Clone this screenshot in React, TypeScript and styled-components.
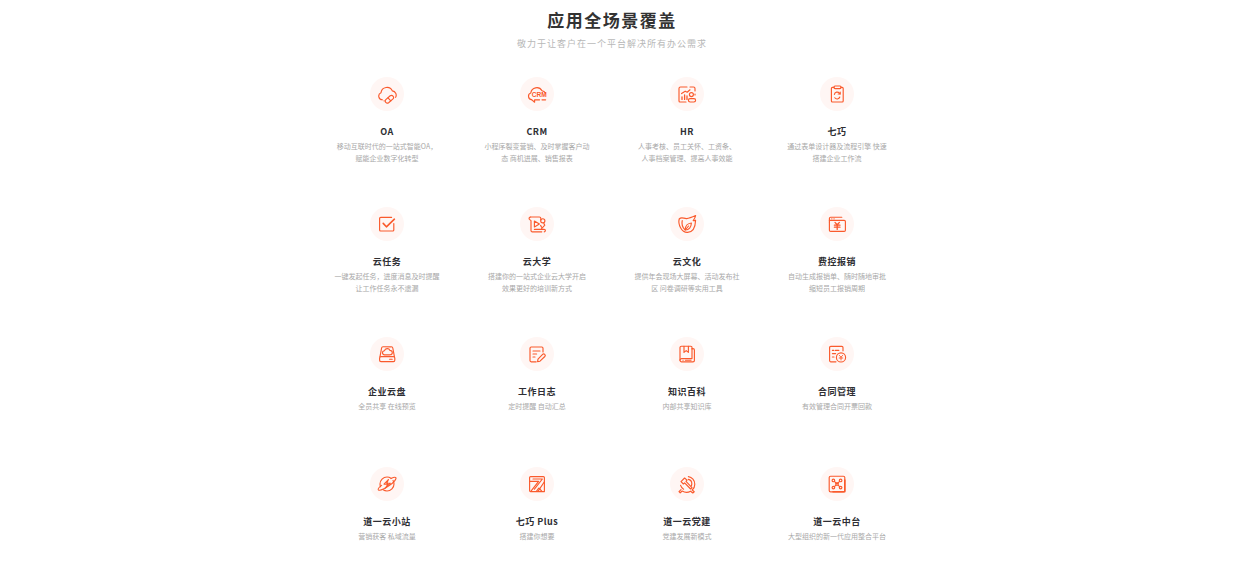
import React from 'react'
import styled, { createGlobalStyle } from 'styled-components'

const GlobalStyle = createGlobalStyle`
  html, body {
    margin: 0;
    padding: 0;
    background: #fff;
  }
  body {
    font-family: "Noto Sans CJK SC", "Noto Sans", sans-serif;
  }
`

const Page = styled.div`
  width: 1224px;
  height: 568px;
  overflow: hidden;
  display: flex;
  flex-direction: column;
  align-items: center;
`
const Heading = styled.h2`
  margin: 7px 0 0;
  font-size: 17px;
  line-height: 25px;
  font-weight: 700;
  letter-spacing: 1.5px;
  color: #333;
`
const SubHeading = styled.p`
  margin: 5px 0 0;
  font-size: 9px;
  line-height: 14px;
  letter-spacing: 1px;
  color: #b8b8b8;
`
const Grid = styled.div`
  margin-top: 26px;
  display: grid;
  grid-template-columns: repeat(4, 150px);
  grid-auto-rows: 130px;
`
const Cell = styled.div`
  display: flex;
  flex-direction: column;
  align-items: center;
  text-align: center;
`
const IconCircle = styled.div`
  width: 34px;
  height: 34px;
  border-radius: 50%;
  background: #fff6f4;
  display: flex;
  align-items: center;
  justify-content: center;
`
const Title = styled.h4`
  margin: 14px 0 0;
  font-size: 9px;
  line-height: 13px;
  font-weight: 700;
  letter-spacing: 0.5px;
  color: #2e2e33;
`
const Desc = styled.p`
  margin: 2px 0 0;
  width: 130px;
  font-size: 7px;
  line-height: 12px;
  color: #a8a8a8;
  white-space: pre-line;
`
const Svg = styled.svg`
  width: 20px;
  height: 20px;
  fill: none;
  stroke: #fa5a2c;
  stroke-width: 1.15;
  stroke-linecap: round;
  stroke-linejoin: round;
`
const IconLabel = styled.text`
  fill: #fa5a2c;
  stroke: none;
  font-family: "Liberation Sans", sans-serif;
  font-weight: 700;
  text-anchor: middle;
`

const icons: Record<string, React.ReactNode> = {
  oa: (
    <>
      <path d="M5.4 15.8a3.7 3.7 0 0 1-1.4-7.1 6 6 0 0 1 11.4-1.8 4.3 4.3 0 0 1 3.2 6.4" />
      <path d="M8.8 15.6l4.4-3.8a2.1 2.1 0 0 1 2.8 3.1l-4.4 3.8a2.1 2.1 0 0 1-2.8-3.1z" />
      <path d="M11 13.8l2.8 3" />
      <path d="M7 16.8h.1" />
    </>
  ),
  crm: (
    <>
      <path d="M4.6 15.6a3.4 3.4 0 0 1-.8-6.6 6 6 0 0 1 11.2-2.2 4.3 4.3 0 0 1 3.4 2.4" />
      <path d="M4.6 15.6l3 2.6v-2.4h5" />
      <path d="M15 15.8h3.6" />
      <IconLabel x="12.2" y="13.4" fontSize="6.6">CRM</IconLabel>
    </>
  ),
  hr: (
    <>
      <path d="M10 3H3.5A1.5 1.5 0 0 0 2 4.5V17a1 1 0 0 0 1 1h6" />
      <path d="M13 3h3.5A1.5 1.5 0 0 1 18 4.5V7" />
      <path d="M18 10v1" />
      <path d="M4.6 9.6l3.6-2.4 2 1L13 5.8" />
      <path d="M5 15.4v-2.6M7.6 15.4v-4.4M10 15.4v-3.4" strokeWidth="1.3" />
      <circle cx="14.4" cy="10.6" r="2" />
      <rect x="11.4" y="14.6" width="7.2" height="3.4" rx="1.7" />
    </>
  ),
  qiqiao: (
    <>
      <rect x="7" y="2" width="7" height="2.6" rx="1" />
      <path d="M7 3.4H5.4a1 1 0 0 0-1 1V17a1 1 0 0 0 1 1h9.8a1 1 0 0 0 1-1V4.4a1 1 0 0 0-1-1H14" />
      <path d="M7.4 10.4a2.8 2.8 0 0 1 5-1.2l.6.8" />
      <path d="M13.2 8v2h-2" />
      <path d="M12.8 13a2.8 2.8 0 0 1-5 .8" />
    </>
  ),
  task: (
    <>
      <path d="M14.6 3.4H3.8A1.2 1.2 0 0 0 2.6 4.6V16a1 1 0 0 0 1 1h12.2a1 1 0 0 0 1-1V9.6" />
      <path d="M6.2 9.4l3.2 3.4 8-7.6" strokeWidth="1.6" />
    </>
  ),
  college: (
    <>
      <path d="M3.6 3h8.8a1.4 1.4 0 0 1 1.4 1.4v1.6" />
      <path d="M3.6 3A1.5 1.5 0 0 0 2.4 5.4L4 6.6v10a1.2 1.2 0 0 0 1.2 1.2h9.6" />
      <path d="M7.4 7l5 2.9-5 3z" />
      <circle cx="15.8" cy="6.8" r="2.1" />
      <path d="M13.6 11.4l1 1.8M16.8 9.4l1 1.8-3.2 3.4" />
      <path d="M7.4 15.4h9.8a1.2 1.2 0 0 1 0 2.4" />
    </>
  ),
  culture: (
    <>
      <path d="M2.2 5c2.4-2.6 4.6-.2 7.4-.4 3-.2 5.6-1.4 9-3-.4 2-1.2 3.4-2.4 5 1 .2 1.6 0 2.4-.4-.2 5.8-2 11.8-8 12.2C4.4 18.8.8 10 2.2 5z" />
      <path d="M5.2 6.6c-.6 3.4.4 6.8 2.4 8.8" />
      <path d="M8.2 16c3.8.2 6-3 6.2-7-3.4.2-6.2 2.8-6.2 7z" />
      <path d="M8.2 16l3.4-4" />
    </>
  ),
  expense: (
    <>
      <path d="M2.4 8V4.4a1.2 1.2 0 0 1 1.2-1.2h11.2" />
      <path d="M2.4 6.4h14.8a1.2 1.2 0 0 1 1.2 1.2v8.6a1.2 1.2 0 0 1-1.2 1.2H3.6a1.2 1.2 0 0 1-1.2-1.2V8" />
      <path d="M4.8 4.8h.1M7 4.8h.1" />
      <path d="M8 8.4l2.2 2.4 2.2-2.4M7.4 11.2h5.6M7.4 13.2h5.6M10.2 10.8v4.6" strokeWidth="1.3" />
    </>
  ),
  disk: (
    <>
      <path d="M3 12.6L4.6 4a1.4 1.4 0 0 1 1.4-1.2h8.4A1.4 1.4 0 0 1 15.8 4l1.6 8.6" />
      <rect x="2.6" y="12.6" width="15.2" height="5" rx="1.4" />
      <path d="M7.6 10.8a2 2 0 0 1-.2-4 3 3 0 0 1 5.6-.4 2.2 2.2 0 0 1 .2 4.4z" />
      <path d="M12.6 15.2h2.6" />
    </>
  ),
  log: (
    <>
      <path d="M16 8V4.2A1.2 1.2 0 0 0 14.8 3H4.2A1.2 1.2 0 0 0 3 4.2v12.4a1.2 1.2 0 0 0 1.2 1.2h5" />
      <path d="M6 7h7M6 10h3.6M6 13h2" />
      <path d="M11 15.2l4.6-4.8a1.5 1.5 0 0 1 2.2 2.1l-4.8 4.7-2.4.5z" />
    </>
  ),
  wiki: (
    <>
      <path d="M15 5V3.4a1.2 1.2 0 0 0-1.2-1.2H4.4A1.4 1.4 0 0 0 3 3.6v12.6" />
      <path d="M15 4.6h1a1.4 1.4 0 0 1 1.4 1.4v10.4a1.4 1.4 0 0 1-1.4 1.4H4.6A1.6 1.6 0 0 1 3 16.2a1.6 1.6 0 0 1 1.6-1.6H15z" />
      <path d="M7 2.4v6l2.2-1.8 2.2 1.8v-6" />
      <path d="M6 16.2h.1M8.4 16.2h5.6" />
    </>
  ),
  contract: (
    <>
      <path d="M16 6.8V3.6A1.2 1.2 0 0 0 14.8 2.4H3.8a1.2 1.2 0 0 0-1.2 1.2v13a1.2 1.2 0 0 0 1.2 1.2H9" />
      <path d="M5.4 6.4h1.4M8.4 6.4h3.4M5.4 9.6h3.2M5.4 13h1.6" />
      <circle cx="14" cy="13.4" r="4.6" />
      <path d="M12.4 11.4l1.6 1.8 1.6-1.8M12.2 14h3.6M14 13.2v2.8" strokeWidth="0.9" />
    </>
  ),
  station: (
    <>
      <circle cx="10" cy="10" r="7" strokeDasharray="15 4 18 3" />
      <path d="M4.6 11.4c-2.6 2-3.8 3.6-3.2 4.4 1 1.2 5.8-.8 10.8-4.2 4.8-3.4 7.6-6.8 6.6-8-.6-.6-2.4-.2-4.8 1" />
      <path d="M11.4 5.6L7 10.2h3.8L8.4 14.2l5-5h-3.6z" />
    </>
  ),
  plus: (
    <>
      <path d="M3.6 2.6h12.8a1 1 0 0 1 1 1v14H3.6a1 1 0 0 1-1-1V3.6a1 1 0 0 1 1-1z" />
      <path d="M2.6 7.4h9L3.8 17.4" />
      <path d="M6 5h9.4L7.4 15.2M11 17.4l6.4-9.6" />
      <path d="M9.4 17.4l2.4-3.4 3.2 3.4" />
    </>
  ),
  party: (
    <>
      <path d="M11.4 2.6c3.6.6 6.4 3.8 6.4 7.6 0 2.4-1 4.4-2.6 5.8l2 1.8-1.4 1.2-2.2-1.8a8 8 0 0 1-8.4-.2l-2 1.8-1.2-1.2 2-2" />
      <path d="M7.6 4L4 7.6l2.4 2.4 1.2-1.2 6 6.2 1.4-1.4-6-6.2 1-1.2z" />
      <path d="M11.2 5.4c2.2.4 3.6 2.2 3.6 4.4 0 .8-.2 1.4-.4 2" />
      <path d="M3.6 11.4c.6 1.8 1.6 3 3 3.8" />
    </>
  ),
  platform: (
    <>
      <rect x="2.2" y="2.2" width="15.6" height="15.6" rx="1.4" />
      <path d="M17.8 6v11.8H6" strokeWidth="1.6" />
      <circle cx="6.4" cy="6.4" r="1.3" />
      <circle cx="13.6" cy="6.4" r="1.3" />
      <circle cx="6.4" cy="13.6" r="1.3" />
      <circle cx="13.6" cy="13.6" r="1.3" />
      <path d="M7.4 7.4l5.2 5.2M12.6 7.4l-5.2 5.2" />
      <rect x="8.8" y="8.8" width="2.4" height="2.4" />
    </>
  ),
}

interface IApp {
  icon: string
  title: string
  desc: string
}

const apps: IApp[] = [
  { icon: 'oa', title: 'OA', desc: '移动互联时代的一站式智能OA，\n赋能企业数字化转型' },
  { icon: 'crm', title: 'CRM', desc: '小程序裂变营销、及时掌握客户动\n态 商机进展、销售报表' },
  { icon: 'hr', title: 'HR', desc: '人事考核、员工关怀、工资条、\n人事档案管理、提高人事效能' },
  { icon: 'qiqiao', title: '七巧', desc: '通过表单设计器及流程引擎 快速\n搭建企业工作流' },
  { icon: 'task', title: '云任务', desc: '一键发起任务，进度消息及时提醒\n让工作任务永不遗漏' },
  { icon: 'college', title: '云大学', desc: '搭建你的一站式企业云大学开启\n效果更好的培训新方式' },
  { icon: 'culture', title: '云文化', desc: '提供年会现场大屏幕、活动发布社\n区 问卷调研等实用工具' },
  { icon: 'expense', title: '费控报销', desc: '自动生成报销单、随时随地审批\n缩短员工报销周期' },
  { icon: 'disk', title: '企业云盘', desc: '全员共享 在线预览' },
  { icon: 'log', title: '工作日志', desc: '定时提醒 自动汇总' },
  { icon: 'wiki', title: '知识百科', desc: '内部共享知识库' },
  { icon: 'contract', title: '合同管理', desc: '有效管理合同开票回款' },
  { icon: 'station', title: '道一云小站', desc: '营销获客 私域流量' },
  { icon: 'plus', title: '七巧 Plus', desc: '搭建你想要' },
  { icon: 'party', title: '道一云党建', desc: '党建发展新模式' },
  { icon: 'platform', title: '道一云中台', desc: '大型组织的新一代应用整合平台' },
]

const App = (): JSX.Element => (
  <Page>
    <GlobalStyle />
    <Heading>应用全场景覆盖</Heading>
    <SubHeading>敬力于让客户在一个平台解决所有办公需求</SubHeading>
    <Grid>
      {apps.map(app => (
        <Cell key={app.title}>
          <IconCircle>
            <Svg viewBox="0 0 20 20">{icons[app.icon]}</Svg>
          </IconCircle>
          <Title>{app.title}</Title>
          <Desc>{app.desc}</Desc>
        </Cell>
      ))}
    </Grid>
  </Page>
)

export default App
